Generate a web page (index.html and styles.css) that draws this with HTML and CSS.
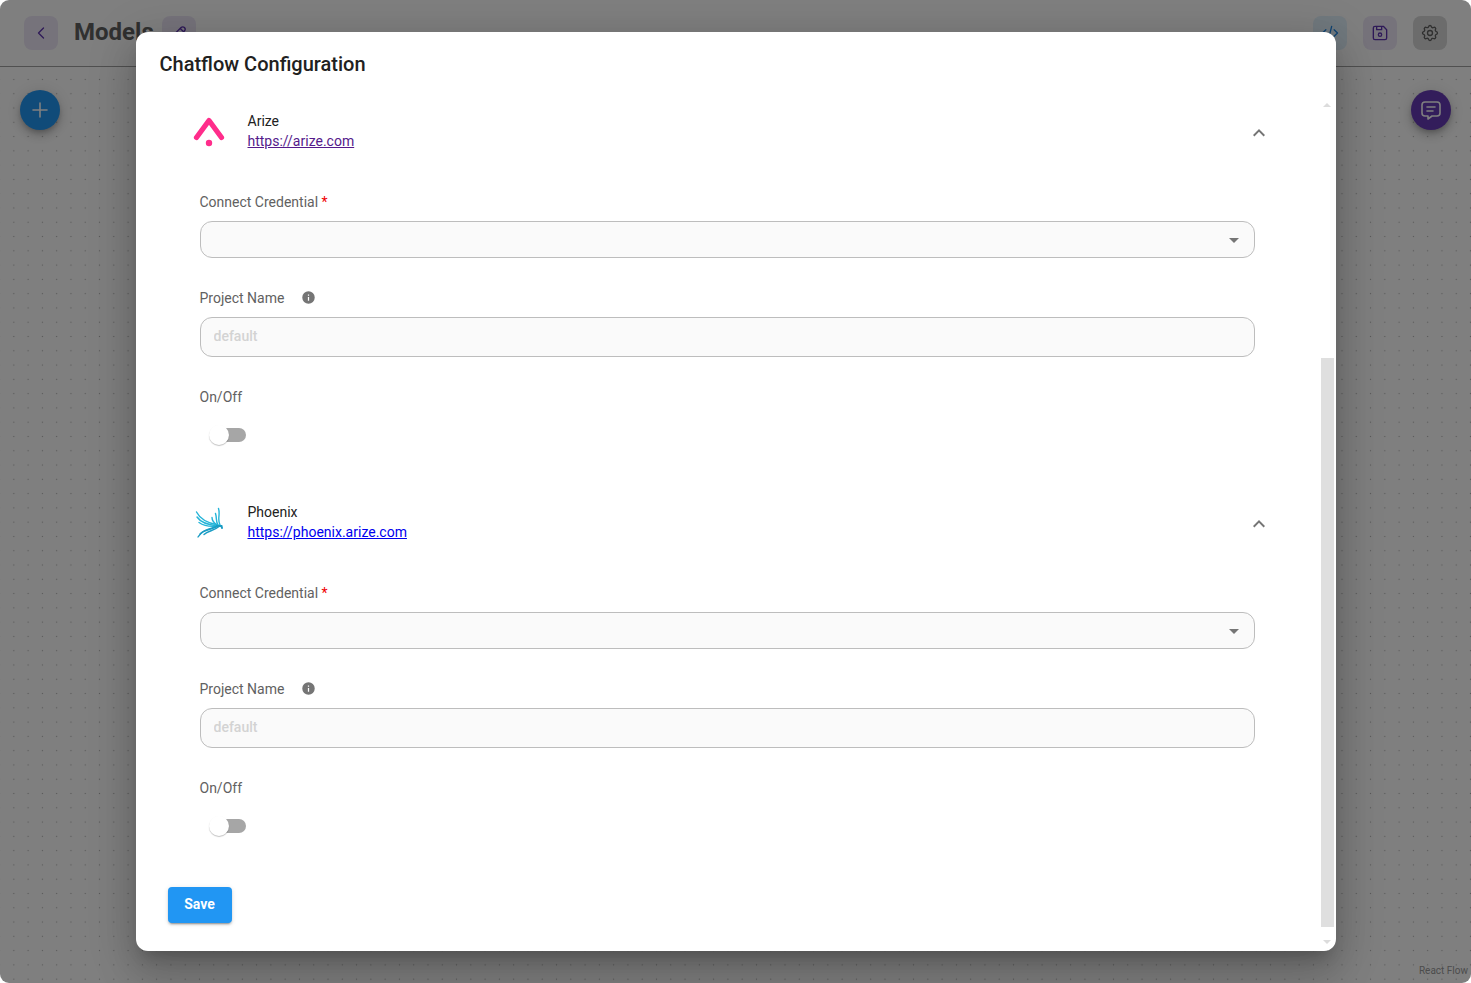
FILE: index.html
```html
<!DOCTYPE html>
<html lang="en">
<head>
<meta charset="utf-8">
<title>Models</title>
<link rel="stylesheet" href="styles.css">
</head>
<body>
<div class="app">
  <header class="topbar">
    <button class="tool purple" aria-label="Back"><svg viewBox="0 0 24 24"><path d="M15 6l-6 6l6 6"/></svg></button>
    <h1 class="title">Models</h1>
    <button class="tool purple edit" aria-label="Rename"><svg viewBox="0 0 24 24"><path d="M4 20h4l10.500 -10.500a2.800 2.800 0 1 0 -4 -4l-10.500 10.500v4M13.500 6.500l4 4"/></svg></button>
    <div class="tools">
      <button class="tool blue" aria-label="API"><svg viewBox="0 0 24 24"><path d="M7 8l-4 4l4 4M17 8l4 4l-4 4M14 4l-4 16"/></svg></button>
      <button class="tool purple" aria-label="Save chatflow"><svg viewBox="0 0 24 24"><path d="M6 4h10l4 4v10a2 2 0 0 1 -2 2h-12a2 2 0 0 1 -2 -2v-12a2 2 0 0 1 2 -2M8 4v4h6v-4"/><circle cx="12" cy="14" r="2"/></svg></button>
      <button class="tool gray" aria-label="Settings"><svg viewBox="0 0 24 24"><path d="M10.325 4.317c.426-1.756 2.924-1.756 3.350 0a1.724 1.724 0 0 0 2.573 1.066c1.543-.94 3.310.826 2.370 2.370a1.724 1.724 0 0 0 1.065 2.572c1.756.426 1.756 2.924 0 3.350a1.724 1.724 0 0 0-1.066 2.573c.94 1.543-.826 3.310-2.370 2.370a1.724 1.724 0 0 0-2.572 1.065c-.426 1.756-2.924 1.756-3.350 0a1.724 1.724 0 0 0-2.573-1.066c-1.543.94-3.310-.826-2.370-2.370a1.724 1.724 0 0 0-1.065-2.572c-1.756-.426-1.756-2.924 0-3.350a1.724 1.724 0 0 0 1.066-2.573c-.94-1.543.826-3.310 2.370-2.370c1 .608 2.296.070 2.572-1.065z"/><circle cx="12" cy="12" r="3"/></svg></button>
    </div>
  </header>
  <main class="canvas">
    <div class="canvas-actions">
      <button class="fab add" aria-label="Add node"><svg viewBox="0 0 24 24"><path d="M12 5v14M5 12h14"/></svg></button>
      <button class="fab chat" aria-label="Chat"><svg viewBox="0 0 24 24"><path d="M8 9h8M8 13h6M9 18h-3a3 3 0 0 1 -3 -3v-8a3 3 0 0 1 3 -3h12a3 3 0 0 1 3 3v8a3 3 0 0 1 -3 3h-5l-4 3z"/></svg></button>
    </div>
    <span class="attribution">React Flow</span>
  </main>
  <div class="backdrop">
    <section class="dialog" role="dialog">
      <h2 class="dialog-title">Chatflow Configuration</h2>
      <div class="dialog-body">
        <div class="content">
          <section class="provider">
            <div class="summary">
              <svg class="logo" viewBox="0 0 32 32"><path d="M3.500 22.500L16 5.500L28.500 22.500" fill="none" stroke="#ff2d8b" stroke-width="5.200" stroke-linecap="round" stroke-linejoin="round"/><circle cx="16" cy="28" r="3.200" fill="#ff2d8b"/></svg>
              <div class="names"><span>Arize</span><a class="visited" href="#">https://arize.com</a></div>
              <svg class="chevron" viewBox="0 0 24 24"><path d="M12 8l-6 6 1.410 1.410L12 10.830l4.590 4.580L18 14z"/></svg>
            </div>
            <div class="fields">
              <div class="label">Connect Credential&nbsp;<b class="required">*</b></div>
              <div class="select"><svg viewBox="0 0 24 24"><path d="M7 10l5 5 5-5z"/></svg></div>
              <div class="label project">Project Name<svg class="info" viewBox="0 0 24 24"><path d="M12 2a10 10 0 1 0 0 20a10 10 0 0 0 0-20zm1 15h-2v-6h2zm0-8h-2V7h2z"/></svg></div>
              <input class="text" placeholder="default">
              <div class="label onoff">On/Off</div>
              <div class="switch"><i class="thumb"></i></div>
            </div>
          </section>
          <section class="provider">
            <div class="summary">
              <svg class="logo" viewBox="0 0 32 32" fill="none" stroke-width="1.400" stroke-linecap="round"><g stroke="#25b4d8"><path d="M3.500 6C7 13 14 17 25 19"/><path d="M4 11C8 17 15 19 25 20"/><path d="M6 16.500C11 20 17 21 25 20"/><path d="M25.500 2.500C27.500 9 24 13 27 19"/><path d="M22.500 7.500C24 12 22.500 15 25 19"/><path d="M19 11.500C19 15 21 17 24 19"/></g><g stroke="#1a9cc4"><path d="M5 31C10 23 17 24.500 25 20"/><path d="M7 28C12 23 17 23 25 20"/><path d="M11 28.500C15 24.500 21 25 26 20.500"/><path d="M24 20L28.500 20L29 22" stroke-width="2"/></g></svg>
              <div class="names"><span>Phoenix</span><a href="#">https://phoenix.arize.com</a></div>
              <svg class="chevron" viewBox="0 0 24 24"><path d="M12 8l-6 6 1.410 1.410L12 10.830l4.590 4.580L18 14z"/></svg>
            </div>
            <div class="fields">
              <div class="label">Connect Credential&nbsp;<b class="required">*</b></div>
              <div class="select"><svg viewBox="0 0 24 24"><path d="M7 10l5 5 5-5z"/></svg></div>
              <div class="label project">Project Name<svg class="info" viewBox="0 0 24 24"><path d="M12 2a10 10 0 1 0 0 20a10 10 0 0 0 0-20zm1 15h-2v-6h2zm0-8h-2V7h2z"/></svg></div>
              <input class="text" placeholder="default">
              <div class="label onoff">On/Off</div>
              <div class="switch"><i class="thumb"></i></div>
            </div>
          </section>
          <button class="save">Save</button>
        </div>
        <div class="scrollbar"><i class="arrow up"></i><i class="scroll-thumb"></i><i class="arrow down"></i></div>
      </div>
    </section>
  </div>
</div>
</body>
</html>
```
FILE: styles.css
```css
* { box-sizing: border-box; }
body { margin: 0; background: #fff; font-family: Roboto, sans-serif; font-size: 14px; color: #212121; }
button { border: 0; padding: 0; font: inherit; }
.app { position: relative; display: flex; flex-direction: column; height: 983px; border-radius: 9px; overflow: hidden; background: #fff; }

.topbar { display: flex; align-items: center; height: 67px; padding: 0 24px; border-bottom: 1px solid #a0a0a0; }
.tool { display: grid; place-items: center; width: 34px; height: 34px; border-radius: 8px; }
.tool svg { width: 20px; height: 20px; fill: none; stroke: currentColor; stroke-width: 1.6; stroke-linecap: round; stroke-linejoin: round; }
.purple { background: #ede7f6; color: #5e35b1; }
.blue { background: #e3f2fd; color: #1e88e5; }
.gray { background: #d8d8d8; color: #616161; }
.title { margin: 0 0 2px 16px; font-size: 24px; line-height: 32px; font-weight: 700; color: #616161; }
.edit { margin-left: 8px; }
.tools { display: flex; gap: 16px; margin-left: auto; }

.canvas { flex: 1; display: flex; flex-direction: column; justify-content: space-between; background: radial-gradient(circle at 50% 50%, #b0b0b0 0, #b0b0b0 .5px, transparent 1px) 6.700px 5.300px / 14.290px 14.290px; }
.canvas-actions { display: flex; justify-content: space-between; padding: 23px 20px; }
.fab { display: grid; place-items: center; width: 40px; height: 40px; border-radius: 50%; color: #fff; box-shadow: 0 3px 5px -1px rgba(0,0,0,.2), 0 6px 10px rgba(0,0,0,.14), 0 1px 18px rgba(0,0,0,.12); }
.fab svg { width: 24px; height: 24px; fill: none; stroke: currentColor; stroke-width: 1.6; stroke-linecap: round; stroke-linejoin: round; }
.add { background: #2196f3; }
.chat { background: #673ab7; }
.attribution { align-self: flex-end; padding: 0 3px 6px; font-size: 10px; line-height: 13px; color: #999; }

.backdrop { position: absolute; inset: 0; display: flex; justify-content: center; align-items: flex-start; padding-top: 32px; background: rgba(0,0,0,.5); }
.dialog { width: 1200px; height: 919px; border-radius: 12px; background: #fff; overflow: hidden; display: flex; flex-direction: column; box-shadow: 0 11px 15px -7px rgba(0,0,0,.2), 0 24px 38px 3px rgba(0,0,0,.14), 0 9px 46px 8px rgba(0,0,0,.12); }
.dialog-title { margin: 0; padding: 16px 24px; font-size: 20px; line-height: 32px; font-weight: 500; }
.dialog-body { flex: 1; display: flex; justify-content: space-between; }
.content { width: 1160px; padding-left: 32px; }
.provider { height: 391px; }
.summary { display: flex; align-items: center; height: 70px; padding: 0 25px 0 25px; }
.logo { width: 32px; height: 32px; }
.names { display: flex; flex-direction: column; flex: 1; margin-left: 23px; line-height: 20px; }
.names a { align-self: flex-start; color: #0000ee; }
.names a.visited { color: #551a8b; }
.chevron { width: 24px; height: 24px; margin-top: 3px; fill: #757575; }
.fields { padding: 26px 41px 0 32px; }
.label { display: flex; align-items: center; height: 20px; color: #616161; }
.required { color: #f00000; font-weight: 400; }
.select { display: flex; align-items: center; justify-content: flex-end; height: 37px; margin-top: 9px; padding-right: 8px; border: 1px solid #bdbdbd; border-radius: 12px; background: #fafafa; }
.select svg { width: 24px; height: 24px; fill: #757575; }
.project { margin-top: 30px; }
.info { width: 15px; height: 15px; margin: 0 0 1px 17px; fill: #757575; }
.text { display: block; width: 100%; height: 40px; margin-top: 9px; padding: 0 13px 2px; border: 1px solid #bdbdbd; border-radius: 12px; background: #fafafa; font: 500 14px Roboto, sans-serif; }
.text::placeholder { color: #d3d3d3; opacity: 1; }
.onoff { margin-top: 30px; }
.switch { display: flex; align-items: center; width: 34px; height: 14px; margin: 21px 0 0 12px; border-radius: 7px; background: #a6a6a6; }
.thumb { flex: none; width: 20px; height: 20px; margin-left: -3px; border-radius: 50%; background: #fff; box-shadow: 0 1px 1px rgba(0,0,0,.24); }
.save { width: 64px; height: 36px; margin-top: 9px; padding-bottom: 2px; border-radius: 4px; background: #2196f3; color: #fff; font-weight: 700; box-shadow: 0 3px 1px -2px rgba(0,0,0,.2), 0 2px 2px rgba(0,0,0,.14), 0 1px 5px rgba(0,0,0,.12); }
.scrollbar { display: flex; flex-direction: column; align-items: center; width: 13px; margin-right: 2px; padding: 7px 0 7px; }
.arrow { border: 4px solid transparent; border-top: 0; border-bottom: 4px solid #dcdcdc; }
.down { margin-top: auto; border-bottom: 0; border-top: 4px solid #dcdcdc; }
.scroll-thumb { width: 13px; height: 569px; margin-top: 251px; background: #dfdfdf; }
```
